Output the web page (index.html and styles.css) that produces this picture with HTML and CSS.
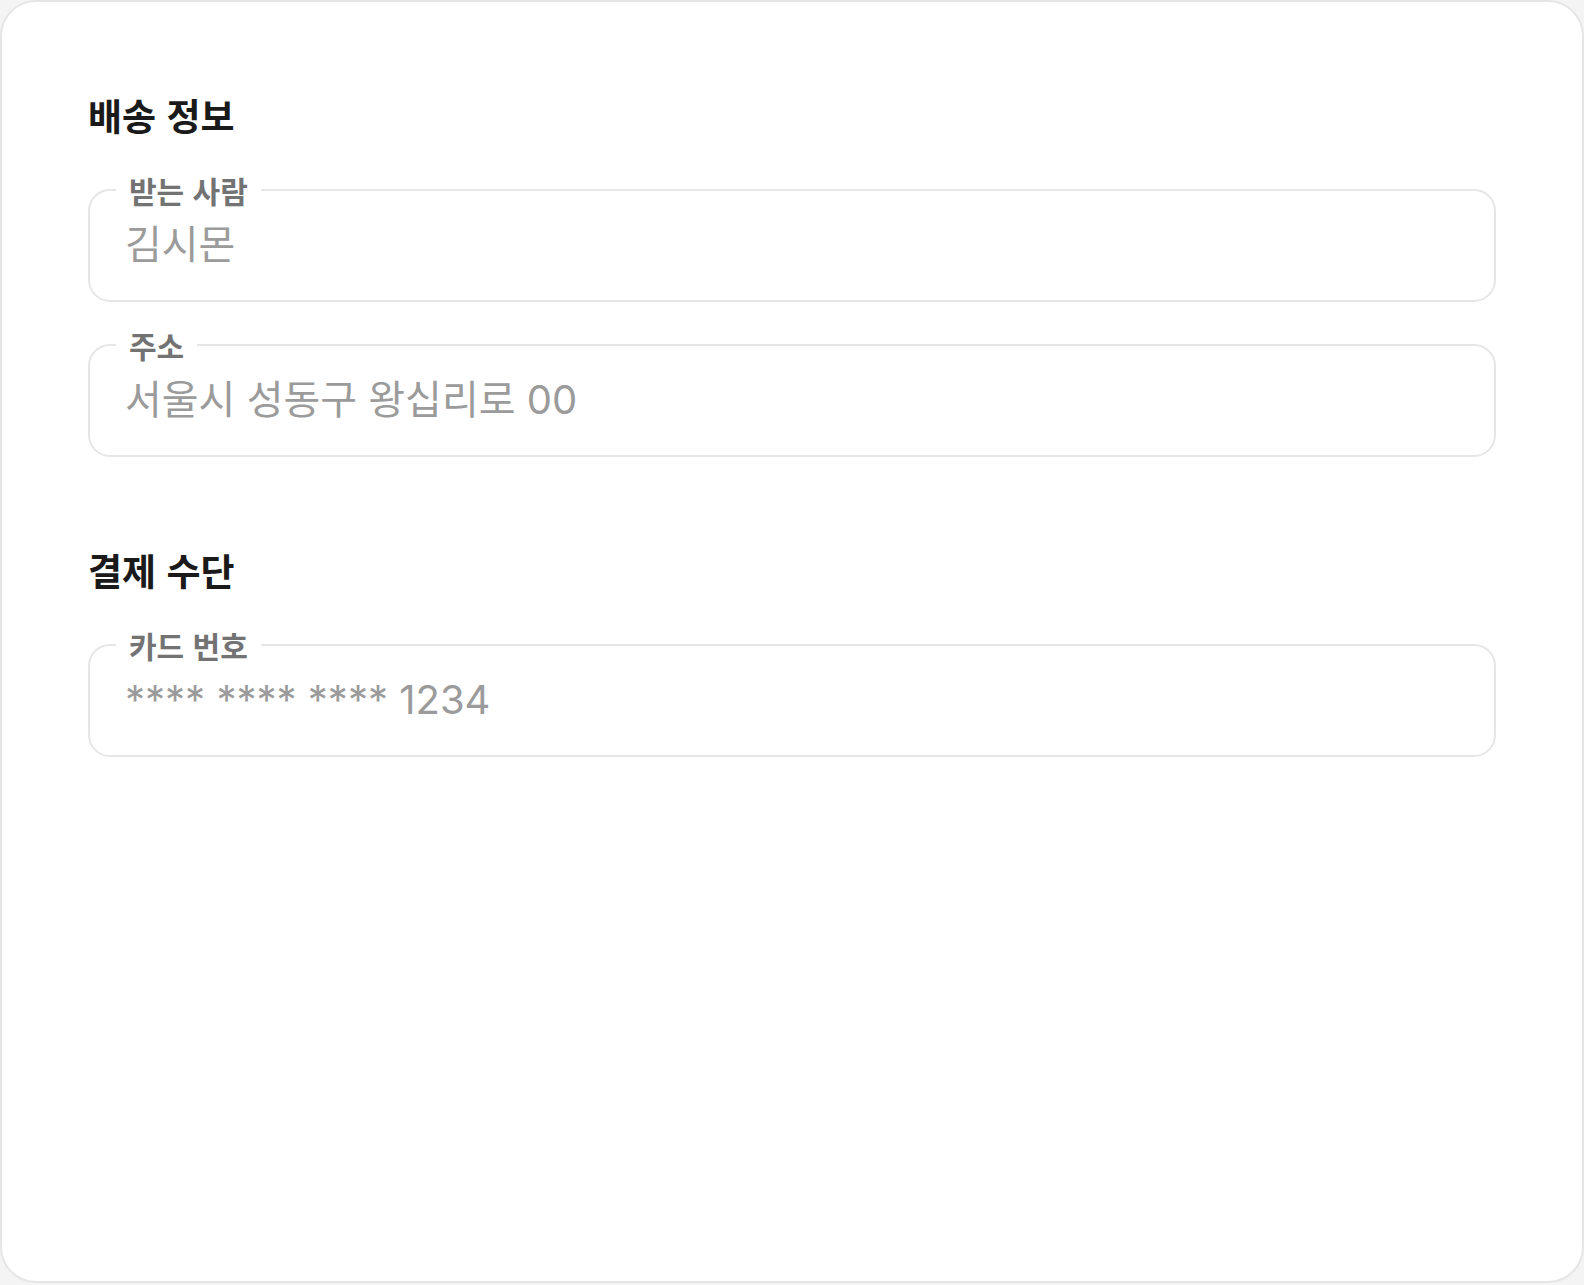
FILE: index.html
```html
<!DOCTYPE html>
<html lang="ko">
<head>
  <meta charset="UTF-8">
  <meta name="viewport" content="width=device-width, initial-scale=1.0">
  <title>주문서</title>
  <link rel="stylesheet" href="styles.css">
</head>
<body>
  <div class="card">
    <section class="group">
      <h2 class="group_title">배송 정보</h2>
      <fieldset class="field">
        <legend class="field_label">받는 사람</legend>
        <input class="field_input" type="text" placeholder="김시몬">
      </fieldset>
      <fieldset class="field">
        <legend class="field_label">주소</legend>
        <input class="field_input" type="text" placeholder="서울시 성동구 왕십리로 00">
      </fieldset>
    </section>

    <section class="group">
      <h2 class="group_title">결제 수단</h2>
      <fieldset class="field">
        <legend class="field_label">카드 번호</legend>
        <input class="field_input" type="text" placeholder="**** **** **** 1234">
      </fieldset>
    </section>
  </div>
</body>
</html>
```

FILE: styles.css
```css
html, body {
  margin: 0;
  padding: 0;
  height: 100%;
}
body {
  background-color: #f4f4f4;
  font-family: "Noto Sans CJK KR", "Noto Sans", sans-serif;
}
.card {
  box-sizing: border-box;
  height: 1283px;
  background-color: white;
  border: 2px solid #e6e6e6;
  border-radius: 36px;
  padding: 91px 86px 0 86px;
  display: flex;
  flex-direction: column;
  gap: 91px;
}
.group {
  display: flex;
  flex-direction: column;
  gap: 27px;
}
.group_title {
  margin: 0 0 10px 0;
  font-size: 37px;
  line-height: 44px;
  font-weight: 700;
  color: #1a1a1a;
}
.field {
  margin: 0;
  padding: 15px 35px 31px 35px;
  border: 2px solid #e6e6e6;
  border-radius: 22px;
  min-width: 0;
}
.field_label {
  margin-left: -9px;
  padding: 0 13px;
  font-size: 30px;
  line-height: 32px;
  font-weight: 600;
  color: #737373;
}
.field_input {
  display: block;
  width: 100%;
  box-sizing: border-box;
  margin: 0;
  padding: 0;
  border: none;
  outline: none;
  background: transparent;
  font-family: "Inter", "Noto Sans CJK KR", sans-serif;
  font-size: 40px;
  line-height: 48px;
  height: 48px;
  color: #999;
}
.field_input::placeholder {
  color: #9b9b9b;
}
```
